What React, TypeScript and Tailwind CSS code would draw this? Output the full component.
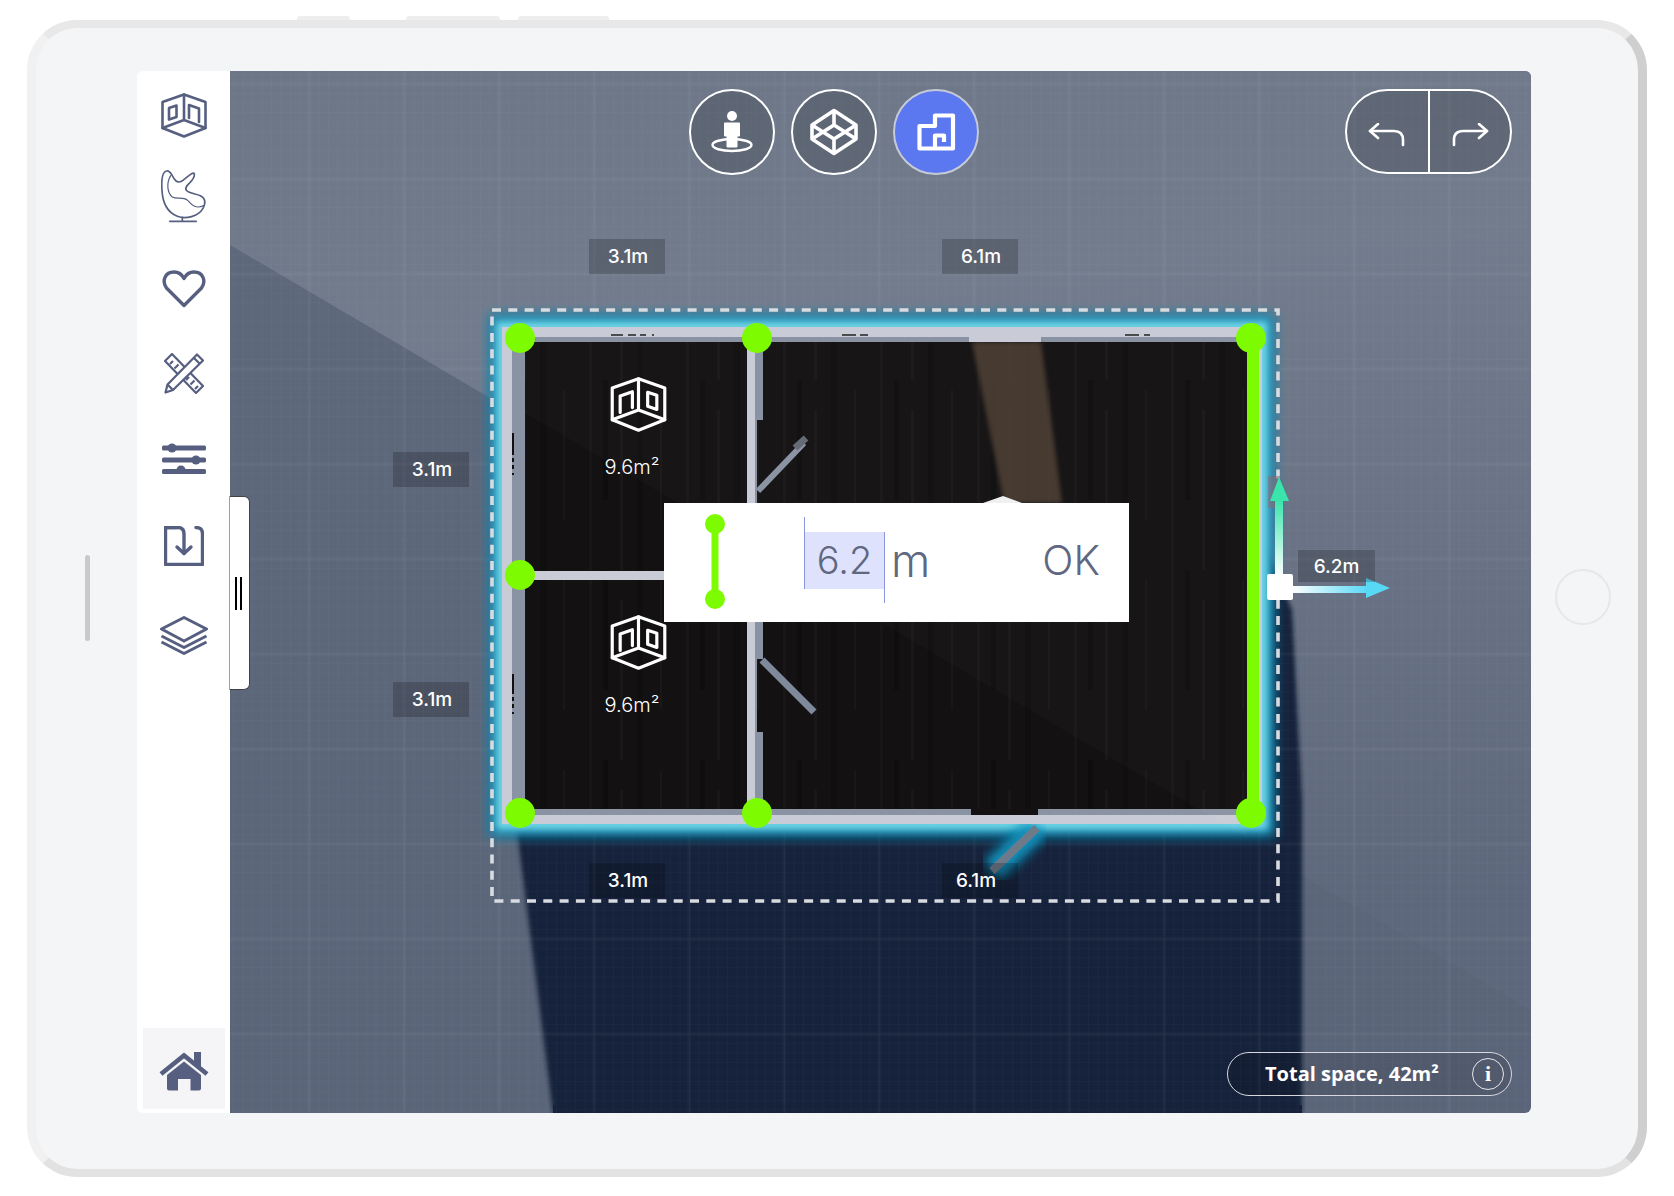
import React from "react";

const SIDE = "#565f80";

function RoomIcon({ color, flip, className }: { color: string; flip?: boolean; className?: string }) {
  return (
    <svg viewBox="0 0 46 45" className={className} fill="none" stroke={color} strokeWidth="2.6" strokeLinejoin="round" strokeLinecap="round">
      <g transform={flip ? "translate(46 0) scale(-1 1)" : undefined}>
        <path d="M23 1.5 L44.5 9 V35 L23 43.5 L1.5 35 V9 Z" />
        <path d="M23 1.5 V27 L1.5 35 M23 27 L44.5 35" />
        <path d="M8 15 L15.5 12.5 V24 L8 26.5 Z" />
        <path d="M28 25 V12 L38 15.5 V29" />
      </g>
    </svg>
  );
}

function Label({ children, className, textClass }: { children: React.ReactNode; className: string; textClass?: string }) {
  return (
    <div className={`absolute flex items-center justify-center bg-black/20 pt-[2px] text-white text-[19px] font-medium [font-family:Inter,sans-serif] ${className}`}>
      <span className={textClass}>{children}</span>
    </div>
  );
}

function Plan() {
  const dots: [number, number][] = [
    [520, 338], [757, 338], [1251, 338], [520, 575], [520, 813], [757, 813], [1251, 813],
  ];
  return (
    <svg viewBox="230 71 1301 1042" className="absolute inset-0 h-full w-full">
      <defs>
        <pattern id="fine" width="9.5" height="9.5" patternUnits="userSpaceOnUse" x="234" y="75">
          <path d="M9.5 0 V9.5 M0 9.5 H9.5" stroke="#ffffff" strokeOpacity="0.04" strokeWidth="1" fill="none" />
        </pattern>
        <pattern id="major" width="95" height="95" patternUnits="userSpaceOnUse" x="215" y="85">
          <path d="M95 0 V95 M0 95 H95" stroke="#ffffff" strokeOpacity="0.065" strokeWidth="3" fill="none" />
        </pattern>
        <pattern id="wood" width="97" height="190" patternUnits="userSpaceOnUse">
          <rect width="97" height="190" fill="#131112" />
          <rect x="7" width="3" height="190" fill="#181616" />
          <rect x="21" width="5" height="120" fill="#0f0e0f" />
          <rect x="38" y="30" width="3" height="160" fill="#191717" />
          <rect x="55" width="6" height="190" fill="#100f10" />
          <rect x="78" y="10" width="2" height="130" fill="#191717" />
        </pattern>
        <linearGradient id="upper" x1="0" y1="0" x2="0.15" y2="1">
          <stop offset="0" stopColor="#6c7687" />
          <stop offset="0.3" stopColor="#737c8d" />
          <stop offset="1" stopColor="#5e687c" />
        </linearGradient>
        <linearGradient id="lower" x1="0" y1="0" x2="0" y2="1">
          <stop offset="0" stopColor="#5f697c" />
          <stop offset="1" stopColor="#5b6579" />
        </linearGradient>
        <linearGradient id="upShaft" x1="0" y1="1" x2="0" y2="0">
          <stop offset="0" stopColor="#ffffff" />
          <stop offset="1" stopColor="#39e5ab" />
        </linearGradient>
        <linearGradient id="rightShaft" x1="0" y1="0" x2="1" y2="0">
          <stop offset="0" stopColor="#ffffff" />
          <stop offset="1" stopColor="#57d8f5" />
        </linearGradient>
        <filter id="blur1" x="-5%" y="-5%" width="110%" height="110%"><feGaussianBlur stdDeviation="1" /></filter>
        <filter id="blur2" x="-20%" y="-20%" width="140%" height="140%"><feGaussianBlur stdDeviation="2" /></filter>
        <filter id="blur4" x="-20%" y="-20%" width="140%" height="140%"><feGaussianBlur stdDeviation="3.5" /></filter>
        <filter id="blur7" x="-20%" y="-20%" width="140%" height="140%"><feGaussianBlur stdDeviation="6" /></filter>
      </defs>

      <rect x="230" y="71" width="1301" height="1042" fill="url(#lower)" />
      <polygon points="230,71 1531,71 1531,1010 230,245" fill="url(#upper)" />
      <polygon points="517,830 553,1113 1302,1113 1302,800 1292,610 1262,540" fill="#16213a" filter="url(#blur2)" />
      <rect x="553" y="1105" width="749" height="10" fill="#16213a" />
      <rect x="230" y="71" width="1301" height="1042" fill="url(#fine)" />
      <rect x="230" y="71" width="1301" height="1042" fill="url(#major)" filter="url(#blur1)" />

      {/* glow */}
      <rect x="502" y="327" width="760" height="497" fill="none" stroke="#0a86b0" strokeWidth="26" filter="url(#blur7)" />
      <rect x="502" y="327" width="760" height="497" fill="none" stroke="#6fd6e6" strokeWidth="12" filter="url(#blur4)" />
      <line x1="1037" y1="828" x2="992" y2="871" stroke="#0f93bd" strokeWidth="24" filter="url(#blur7)" />

      {/* walls */}
      <rect x="502" y="327" width="760" height="497" fill="#c9ccd6" />
      <rect x="512" y="337" width="747" height="478" fill="#8a93a3" />
      <rect x="525" y="342" width="722" height="467" fill="url(#wood)" />
      <polygon points="525,413 1247,838 1247,342 525,342" fill="#ffffff" fillOpacity="0.018" />
      <polygon points="972,342 1041,342 1062,503 1004,503" fill="#57453a" fillOpacity="0.75" filter="url(#blur2)" />
      <rect x="969" y="337" width="72" height="5" fill="#c9ccd6" />
      <rect x="971" y="809" width="67" height="6" fill="#131112" />

      {/* wall marks */}
      <path d="M611 335 h12 M628 335 h8 M640 335 h6 M652 335 h2 M842 335 h14 M860 335 h8 M1125 335 h14 M1144 335 h6" stroke="#222" strokeWidth="1.5" />
      <path d="M513 433 v22 M513 458 v4 M513 465 v4 M513 473 v2 M513 674 v20 M513 697 v4 M513 704 v4 M513 712 v2" stroke="#111" strokeWidth="2" />

      {/* inner walls */}
      <rect x="520" y="571" width="150" height="9" fill="#c9ccd6" />
      <rect x="747" y="342" width="8" height="467" fill="#c9ccd6" />
      <rect x="755" y="342" width="8" height="78" fill="#8a93a3" />
      <rect x="755" y="420" width="2" height="238" fill="#8a93a3" />
      <rect x="755" y="622" width="8" height="37" fill="#8a93a3" />
      <rect x="755" y="658" width="2" height="74" fill="#8a93a3" />
      <rect x="755" y="732" width="8" height="77" fill="#8a93a3" />
      <line x1="758" y1="491" x2="804" y2="443" stroke="#8b94a3" strokeWidth="6" />
      <line x1="795" y1="448" x2="806" y2="438" stroke="#666c76" strokeWidth="7" />
      <line x1="762" y1="660" x2="814" y2="712" stroke="#7e8a9c" strokeWidth="7" />
      <line x1="1037" y1="828" x2="992" y2="871" stroke="#6d7a8a" strokeWidth="8" />
      <polygon points="983,503 1003,496 1022,503" fill="#f0f0f0" />

      {/* selected wall + nodes */}
      <rect x="1247" y="337" width="12" height="476" fill="#7dfb00" />
      {dots.map(([x, y]) => (
        <circle key={`${x}-${y}`} cx={x} cy={y} r="15" fill="#7dfb00" />
      ))}

      {/* selection box */}
      <rect x="492" y="310" width="786" height="591" fill="none" stroke="#d8dce1" strokeWidth="3.6" strokeDasharray="9 7.3" />

      {/* gizmo */}
      <rect x="1268" y="476" width="12" height="32" fill="#8b6a74" fillOpacity="0.55" />
      <rect x="1275" y="500" width="8" height="76" fill="url(#upShaft)" />
      <polygon points="1279,477 1289,501 1270,501" fill="#39e5ab" />
      <rect x="1292" y="586" width="76" height="7" fill="url(#rightShaft)" />
      <polygon points="1366,578 1390,588 1366,598" fill="#57d8f5" />
      <rect x="1267" y="574" width="26" height="26" rx="2" fill="#ffffff" />
    </svg>
  );
}

export default function App() {
  return (
    <div className="relative h-[1196px] w-[1674px] overflow-hidden bg-white">
      {/* hardware buttons */}
      <div className="absolute left-[297px] top-[16px] h-[8px] w-[53px] rounded-t-[3px] bg-[#eeeeee]" />
      <div className="absolute left-[406px] top-[16px] h-[8px] w-[94px] rounded-t-[3px] bg-[#eeeeee]" />
      <div className="absolute left-[518px] top-[16px] h-[8px] w-[91px] rounded-t-[3px] bg-[#eeeeee]" />

      {/* device */}
      <div className="relative ml-[27px] mt-[20px] h-[1157px] w-[1620px] rounded-[50px] border-b-[8px] border-l-[9px] border-r-[9px] border-t-[8px] border-b-[#e2e2e2] border-l-[#f1f1f2] border-r-[#cfcfcf] border-t-[#e8e8e8] bg-[#f4f5f7] pb-[56px] pl-[101px] pr-[107px] pt-[43px]">
        <div className="absolute left-[49px] top-[527px] h-[86px] w-[5px] rounded-full bg-[#c9c9cb]" />
        <div className="absolute left-[1519px] top-[541px] h-[56px] w-[56px] rounded-full border-2 border-[#e7e7e9]" />

        {/* screen */}
        <div className="flex h-full w-full overflow-hidden rounded-[6px]">
          {/* sidebar */}
          <div className="flex h-full w-[93px] shrink-0 flex-col items-center bg-white">
            <RoomIcon color={SIDE} className="mt-[22px] h-[45px] w-[46px]" />
            <svg viewBox="480 510 150 165" className="mt-[31px] h-[55px] w-[50px]" fill="none" stroke={SIDE} strokeWidth="5" strokeLinecap="round" strokeLinejoin="round">
              <path d="M503 516 C490 518 487 545 489 575 C491 610 505 640 535 652 C560 662 598 652 612 628 C622 610 618 596 604 590 C590 584 570 584 562 574 C552 558 590 548 586 524 C582 518 570 530 552 544 C542 552 532 550 526 540 C518 528 514 514 503 516 Z" />
              <path d="M515 530 C502 552 504 580 520 594 C532 602 552 592 566 604 C576 614 586 632 614 620" strokeWidth="3.6" />
              <path d="M550 655 V666 M512 667 H592" />
            </svg>
            <svg viewBox="0 0 44 38" className="mt-[46px] h-[38px] w-[44px]" fill="none" stroke={SIDE} strokeWidth="3.4" strokeLinejoin="round">
              <path d="M22 35.5 L4.5 18 C-0.5 11 3 2 12 2 C16.5 2 20 4.5 22 8.5 C24 4.5 27.5 2 32 2 C41 2 44.5 11 39.5 18 Z" />
            </svg>
            <svg viewBox="0 0 40 41" className="mt-[45px] h-[41px] w-[40px]" fill="none" stroke={SIDE} strokeWidth="2.2" strokeLinejoin="round">
              <path d="M1 8 L8 1 L39 33 L32 40 Z" />
              <path d="M6 11 L9 8 M10.5 15.5 L14.5 11.5 M15 20 L18 17 M22 27 L25 24 M26.5 31.5 L30.5 27.5 M31 36 L34 33" />
              <path d="M33 1.5 L39 7.5 L9 37 L1.5 39.5 L3.5 31.5 Z" fill="#ffffff" />
              <path d="M30 5 L35.5 10.5 M3.5 31.5 L9 37" />
            </svg>
            <svg viewBox="0 0 44 32" className="mt-[48px] h-[32px] w-[44px]" fill={SIDE}>
              <rect x="0" y="3.5" width="44" height="5" rx="1.5" />
              <rect x="0" y="15.5" width="44" height="5" rx="1.5" />
              <rect x="0" y="27" width="44" height="5" rx="1.5" />
              <circle cx="10" cy="6" r="4.5" />
              <circle cx="34" cy="18" r="4.5" />
              <circle cx="19" cy="28" r="4.5" />
            </svg>
            <svg viewBox="0 0 40 40" className="mt-[52px] h-[40px] w-[40px]" fill="none" stroke={SIDE} strokeWidth="3.4" strokeLinecap="round" strokeLinejoin="round">
              <path d="M13 1.5 H1.5 V38.5 H38.5 V8 Q38.5 1.5 32 1.5" />
              <path d="M1.5 1.5 H14 Q20 1.5 20 8 V27.5" />
              <path d="M13 21 L20 27.5 L27 21" />
            </svg>
            <svg viewBox="0 0 48 39" className="mt-[50px] h-[39px] w-[48px]" fill="none" stroke={SIDE} strokeWidth="3" strokeLinejoin="round">
              <path d="M24 1.5 L46.5 13 L24 25 L1.5 13 Z" />
              <path d="M1.5 20 L24 31.5 L46.5 20" />
              <path d="M1.5 26 L24 37.5 L46.5 26" />
            </svg>
            <div className="mb-[4px] mt-auto flex h-[81px] w-[82px] items-center justify-center bg-[#f5f5f7] pt-[5px]">
              <svg viewBox="0 0 50 39" className="h-[39px] w-[50px]">
                <path d="M2 22 L25 3.5 L48 22" fill="none" stroke={SIDE} strokeWidth="4.6" />
                <rect x="35" y="0" width="7" height="14" fill={SIDE} />
                <path d="M25 9.5 L42 23 V36.5 Q42 38.5 40 38.5 H31.5 V27 H19 V38.5 H10 Q8 38.5 8 36.5 V23 Z" fill={SIDE} />
              </svg>
            </div>
          </div>

          {/* canvas */}
          <div className="relative h-full flex-1">
            <Plan />

            {/* drawer handle */}
            <div className="absolute left-[-1px] top-[425px] flex h-[194px] w-[21px] items-center justify-center gap-[3px] rounded-r-[6px] border border-l-[#9aa0ab] border-[#3f4247] bg-white pr-[2px]">
              <div className="h-[33px] w-[2px] bg-black" />
              <div className="h-[33px] w-[2px] bg-black" />
            </div>

            {/* view buttons */}
            <div className="absolute left-[459px] top-[18px] flex gap-[16px]">
              <div className="flex h-[86px] w-[86px] items-center justify-center rounded-full border-2 border-white bg-black/15">
                <svg viewBox="-26 -26 52 52" className="h-[52px] w-[52px]" fill="none">
                  <ellipse cx="0" cy="13" rx="19.5" ry="6" stroke="#fff" strokeWidth="2.4" />
                  <circle cx="0" cy="-16" r="5" fill="#fff" />
                  <path d="M-7.5 -9 H7.5 V4 H5 V15 H-5 V4 H-7.5 Z" fill="#fff" stroke="#fff" strokeWidth="1" strokeLinejoin="round" />
                </svg>
              </div>
              <div className="flex h-[86px] w-[86px] items-center justify-center rounded-full border-2 border-white bg-black/15">
                <svg viewBox="-26 -26 52 52" className="h-[52px] w-[52px]" fill="none" stroke="#fff" strokeWidth="3.6" strokeLinejoin="round">
                  <path d="M0 -21.5 L22 -7 V7 L0 21.5 L-22 7 V-7 Z" />
                  <path d="M0 -21.5 V-7 M0 7 V21.5 M-22 -7 L0 7 L22 -7 M-22 7 L0 -7 L22 7" />
                </svg>
              </div>
              <div className="flex h-[86px] w-[86px] items-center justify-center rounded-full border-2 border-[#c5cad6] bg-[#5b78f0]">
                <svg viewBox="-26 -26 52 52" className="h-[52px] w-[52px]" fill="none" stroke="#fff" strokeWidth="4.2" strokeLinejoin="round">
                  <path d="M-16.5 -6 H-1 V-16.5 H17 V16.5 H-16.5 Z" />
                  <path d="M-1 16 V3.5 H8 V10" />
                </svg>
              </div>
            </div>

            {/* undo/redo */}
            <div className="absolute right-[19px] top-[18px] flex h-[85px] w-[167px] rounded-full border-2 border-white bg-black/15">
              <div className="flex h-full flex-1 items-center justify-center border-r-2 border-white">
                <svg viewBox="0 0 38 26" className="mt-[8px] h-[26px] w-[38px]" fill="none" stroke="#fff" strokeWidth="2.6" strokeLinecap="round" strokeLinejoin="round">
                  <path d="M2 8 H26 Q35 8 35 17 V22" />
                  <path d="M10 1 L2 8 L10 15" />
                </svg>
              </div>
              <div className="flex h-full flex-1 items-center justify-center">
                <svg viewBox="0 0 38 26" className="mt-[8px] h-[26px] w-[38px]" fill="none" stroke="#fff" strokeWidth="2.6" strokeLinecap="round" strokeLinejoin="round">
                  <path d="M36 8 H12 Q3 8 3 17 V22" />
                  <path d="M28 1 L36 8 L28 15" />
                </svg>
              </div>
            </div>

            {/* dimension labels */}
            <Label className="left-[359px] top-[168px] h-[35px] w-[76px]" textClass="ml-[2px]">3.1m</Label>
            <Label className="left-[712px] top-[168px] h-[35px] w-[76px]" textClass="ml-[2px]">6.1m</Label>
            <Label className="left-[163px] top-[381px] h-[35px] w-[76px]" textClass="ml-[2px]">3.1m</Label>
            <Label className="left-[163px] top-[611px] h-[35px] w-[76px]" textClass="ml-[2px]">3.1m</Label>
            <Label className="left-[359px] top-[792px] h-[35px] w-[76px]" textClass="ml-[2px]">3.1m</Label>
            <Label className="left-[712px] top-[792px] h-[35px] w-[76px]" textClass="mr-[8px]">6.1m</Label>
            <Label className="left-[1068px] top-[479px] h-[32px] w-[77px]">6.2m</Label>

            {/* room tags */}
            <div className="absolute left-[355px] top-[306px] flex w-[94px] flex-col items-center gap-[24px] text-white">
              <RoomIcon color="#ffffff" flip className="ml-[12px] h-[55px] w-[57px]" />
              <div className="text-[20px] font-light leading-[22px] [font-family:Inter,sans-serif]">9.6m²</div>
            </div>
            <div className="absolute left-[355px] top-[544px] flex w-[94px] flex-col items-center gap-[24px] text-white">
              <RoomIcon color="#ffffff" flip className="ml-[12px] h-[55px] w-[57px]" />
              <div className="text-[20px] font-light leading-[22px] [font-family:Inter,sans-serif]">9.6m²</div>
            </div>

            {/* length dialog */}
            <div className="absolute left-[434px] top-[432px] flex h-[119px] w-[465px] items-center bg-white text-[#5f6880] [font-family:Inter,sans-serif]">
              <svg viewBox="0 0 20 96" className="mb-[2px] ml-[41px] h-[96px] w-[20px] shrink-0">
                <rect x="6.5" y="10" width="7" height="76" fill="#7dfb00" />
                <circle cx="10" cy="10" r="10" fill="#7dfb00" />
                <circle cx="10" cy="85" r="10" fill="#7dfb00" />
              </svg>
              <div className="relative mb-[4px] ml-[80px] flex h-[57px] w-[79px] shrink-0 items-center justify-center bg-[#dfe2fc] text-[38px] font-light">
                <span>6.2</span>
                <div className="absolute left-[-1px] top-[-15px] h-[72px] w-[1px] bg-[#8d97e0]" />
                <div className="absolute right-[-1px] top-0 h-[71px] w-[1px] bg-[#8d97e0]" />
              </div>
              <span className="mb-[3px] ml-[7px] text-[45px] font-light">m</span>
              <span className="mb-[3px] ml-auto mr-[29px] text-[41px] font-light">OK</span>
            </div>

            {/* total */}
            <div className="absolute bottom-[17px] right-[19px] flex h-[44px] w-[285px] items-center rounded-full border border-[#d5d8de] bg-black/10 pl-[37px] pr-[7px] text-white">
              <span className="text-[20px] font-bold [font-family:'Open_Sans',sans-serif]">Total space, 42m²</span>
              <div className="ml-auto flex h-[32px] w-[32px] items-center justify-center rounded-full border border-[#e5e7eb] text-[22px] font-bold leading-none [font-family:'Liberation_Serif',serif]">i</div>
            </div>
          </div>
        </div>
      </div>
    </div>
  );
}
